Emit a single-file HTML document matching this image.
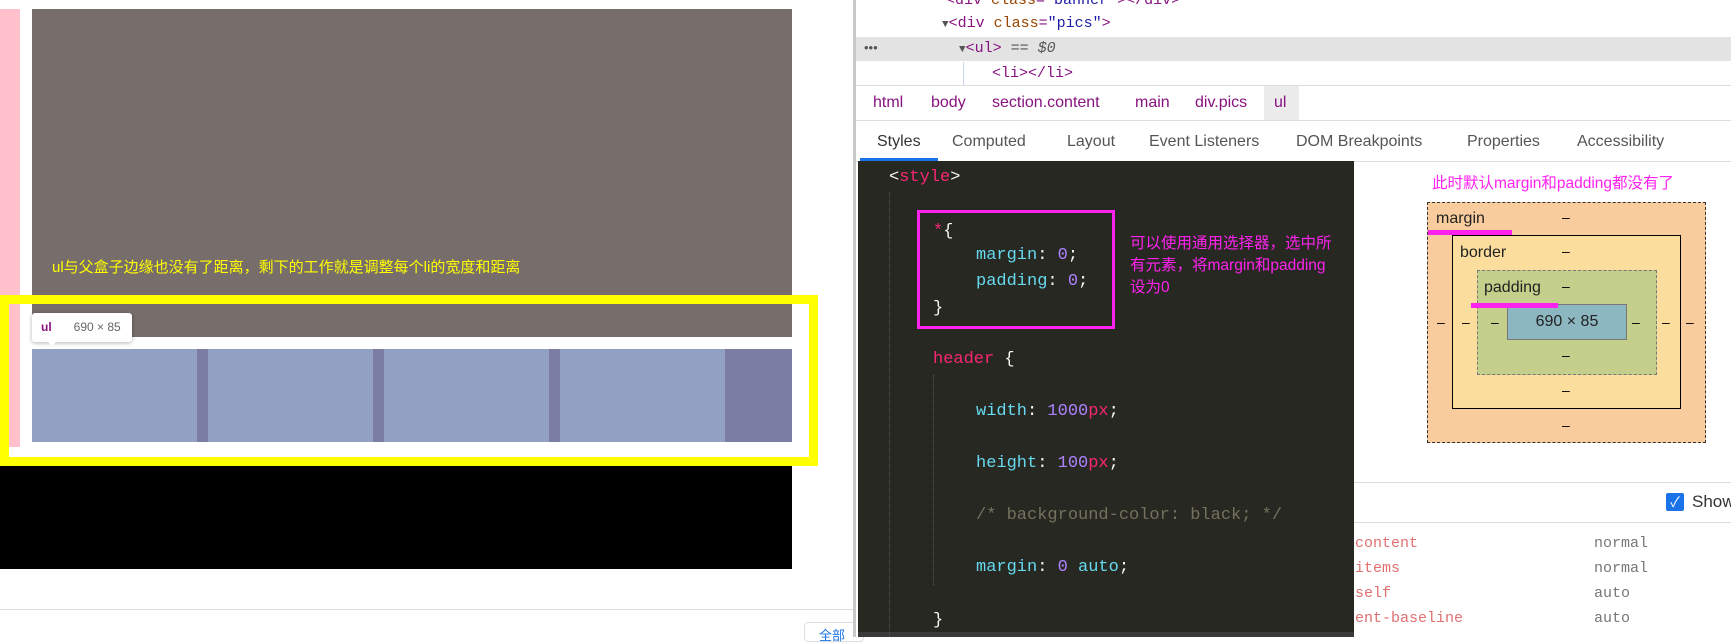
<!DOCTYPE html>
<html><head><meta charset="utf-8"><style>
*{margin:0;padding:0;box-sizing:border-box}
body{width:1731px;height:637px;position:relative;overflow:hidden;background:#fff;font-family:"Liberation Sans","Noto Sans CJK SC",sans-serif}
.a{position:absolute;white-space:nowrap}
.m{font-family:"Liberation Mono","DejaVu Sans Mono",monospace}
</style></head><body>
<!-- page -->
<div class="a" style="left:0;top:9px;width:20px;height:438px;background:#ffc0cb"></div>
<div class="a" style="left:32px;top:9px;width:760px;height:328px;background:#776d6b"></div>
<div class="a" style="left:52px;top:256px;color:#ffff00;font-size:15px">ul与父盒子边缘也没有了距离，剩下的工作就是调整每个li的宽度和距离</div>
<div class="a" style="left:32px;top:349px;width:760px;height:93px;background:#7b7ea2"></div>
<div class="a" style="left:32px;top:349px;width:165px;height:93px;background:#92a1c3"></div>
<div class="a" style="left:208px;top:349px;width:165px;height:93px;background:#92a1c3"></div>
<div class="a" style="left:384px;top:349px;width:165px;height:93px;background:#92a1c3"></div>
<div class="a" style="left:560px;top:349px;width:165px;height:93px;background:#92a1c3"></div>
<div class="a" style="left:0;top:465px;width:792px;height:104px;background:#000"></div>
<div class="a" style="left:0;top:295px;width:818px;height:171px;border:9px solid #ffff00"></div>
<div class="a" style="left:32px;top:313px;width:100px;height:29px;background:#fff;border-radius:3px;box-shadow:0 1px 4px rgba(0,0,0,.3);font-size:12px;line-height:29px;padding-left:9px"><b style="color:#881280">ul</b><span style="color:#666;margin-left:22px">690 × 85</span></div>
<div class="a" style="left:46px;top:340px;width:0;height:0;border-left:6px solid transparent;border-right:6px solid transparent;border-top:6px solid #fff"></div>
<div class="a" style="left:0;top:609px;width:855px;height:1px;background:#ddd"></div>
<div class="a" style="left:804px;top:622px;width:60px;height:20px;border:1px solid #ddd;border-radius:4px;color:#1a73e8;font-size:13px;padding:2px 0 0 14px">全部</div>
<!-- devtools -->
<div class="a" style="left:853px;top:0;width:3px;height:637px;background:#c8c8c8"></div>
<div class="a" style="left:856px;top:0;width:875px;height:637px;background:#fff"></div>
<div class="a" style="left:856px;top:37px;width:875px;height:24px;background:#e3e3e3"></div>
<div class="a m" style="left:946px;top:-8px;font-size:15px;color:#881280">&lt;div <span style="color:#994500">class</span>=<span style="color:#1a1aa6">"banner"</span>&gt;&lt;/div&gt;</div>
<div class="a m" style="left:942px;top:15px;font-size:15px;color:#881280"><span style="color:#555;font-size:11px">▼</span>&lt;div <span style="color:#994500">class</span>=<span style="color:#1a1aa6">"pics"</span>&gt;</div>
<div class="a" style="left:864px;top:40px;font-size:13px;color:#555">•••</div>
<div class="a m" style="left:959px;top:40px;font-size:15px;color:#881280"><span style="color:#555;font-size:11px">▼</span>&lt;ul&gt; <span style="color:#555;font-style:italic">== $0</span></div>
<div class="a" style="left:963px;top:62px;width:1px;height:23px;background:#c9d8f0"></div>
<div class="a m" style="left:992px;top:65px;font-size:15px;color:#881280">&lt;li&gt;&lt;/li&gt;</div>
<div class="a" style="left:856px;top:85px;width:875px;height:1px;background:#ddd"></div>
<div class="a" style="left:1264px;top:86px;width:35px;height:34px;background:#ececec"></div>
<div class="a" style="left:873px;top:94px;font-size:16px;color:#881280">html</div>
<div class="a" style="left:931px;top:94px;font-size:16px;color:#881280">body</div>
<div class="a" style="left:992px;top:94px;font-size:16px;color:#881280">section.content</div>
<div class="a" style="left:1135px;top:94px;font-size:16px;color:#881280">main</div>
<div class="a" style="left:1195px;top:94px;font-size:16px;color:#881280">div.pics</div>
<div class="a" style="left:1274px;top:94px;font-size:16px;color:#881280">ul</div>
<div class="a" style="left:856px;top:120px;width:875px;height:1px;background:#ddd"></div>
<div class="a" style="left:856px;top:161px;width:875px;height:1px;background:#ddd"></div>
<div class="a" style="left:877px;top:133px;font-size:16px;color:#333">Styles</div>
<div class="a" style="left:952px;top:133px;font-size:16px;color:#555">Computed</div>
<div class="a" style="left:1067px;top:133px;font-size:16px;color:#555">Layout</div>
<div class="a" style="left:1149px;top:133px;font-size:16px;color:#555">Event Listeners</div>
<div class="a" style="left:1296px;top:133px;font-size:16px;color:#555">DOM Breakpoints</div>
<div class="a" style="left:1467px;top:133px;font-size:16px;color:#555">Properties</div>
<div class="a" style="left:1577px;top:133px;font-size:16px;color:#555">Accessibility</div>
<div class="a" style="left:860px;top:158px;width:78px;height:3px;background:#1a73e8"></div>
<!-- code panel -->
<div class="a" style="left:858px;top:161px;width:496px;height:476px;background:#272822"></div>
<div class="a" style="left:858px;top:632px;width:496px;height:5px;background:#3a3a3a"></div>
<div class="a" style="left:889px;top:192px;width:0;height:445px;border-left:1px dotted #555"></div>
<div class="a" style="left:933px;top:375px;width:0;height:210px;border-left:1px dotted #555"></div>
<div class="a m" style="left:889px;top:168px;font-size:17px;color:#f8f8f2">&lt;<span style="color:#f92672">style</span>&gt;</div>
<div class="a" style="left:917px;top:210px;width:198px;height:119px;border:3px solid #ff22ee"></div>
<div class="a m" style="left:933px;top:222px;font-size:17px;color:#f8f8f2"><span style="color:#f92672">*</span>{</div>
<div class="a m" style="left:976px;top:246px;font-size:17px;color:#66d9ef">margin<span style="color:#f8f8f2">: </span><span style="color:#ae81ff">0</span><span style="color:#f8f8f2">;</span></div>
<div class="a m" style="left:976px;top:272px;font-size:17px;color:#66d9ef">padding<span style="color:#f8f8f2">: </span><span style="color:#ae81ff">0</span><span style="color:#f8f8f2">;</span></div>
<div class="a m" style="left:933px;top:299px;font-size:17px;color:#f8f8f2">}</div>
<div class="a" style="left:1130px;top:233px;font-size:15.5px;line-height:22px;color:#ff22ee">可以使用通用选择器，选中所<br>有元素，将margin和padding<br>设为0</div>
<div class="a m" style="left:933px;top:350px;font-size:17px;color:#f92672">header <span style="color:#f8f8f2">{</span></div>
<div class="a m" style="left:976px;top:402px;font-size:17px;color:#66d9ef">width<span style="color:#f8f8f2">: </span><span style="color:#ae81ff">1000</span><span style="color:#f92672">px</span><span style="color:#f8f8f2">;</span></div>
<div class="a m" style="left:976px;top:454px;font-size:17px;color:#66d9ef">height<span style="color:#f8f8f2">: </span><span style="color:#ae81ff">100</span><span style="color:#f92672">px</span><span style="color:#f8f8f2">;</span></div>
<div class="a m" style="left:976px;top:506px;font-size:17px;color:#75715e">/* background-color: black; */</div>
<div class="a m" style="left:976px;top:558px;font-size:17px;color:#66d9ef">margin<span style="color:#f8f8f2">: </span><span style="color:#ae81ff">0</span> auto<span style="color:#f8f8f2">;</span></div>
<div class="a m" style="left:933px;top:611px;font-size:17px;color:#f8f8f2">}</div>
<!-- box model -->
<div class="a" style="left:1432px;top:171px;font-size:15.5px;color:#ff22ee">此时默认margin和padding都没有了</div>
<div class="a" style="left:1427px;top:202px;width:279px;height:241px;background:#f9cc9d;border:1px dashed #333"></div>
<div class="a" style="left:1452px;top:235px;width:229px;height:174px;background:#fbdd9d;border:1px solid #000"></div>
<div class="a" style="left:1477px;top:270px;width:180px;height:105px;background:#c3cf8a;border:1px dashed #777"></div>
<div class="a" style="left:1507px;top:304px;width:120px;height:36px;background:#8cb6c0;border:1px solid #777;text-align:center;line-height:34px;font-size:16px;color:#222">690 × 85</div>
<div class="a" style="left:1436px;top:210px;font-size:16px;color:#222">margin</div>
<div class="a" style="left:1428px;top:230px;width:84px;height:5px;background:#ff22ee"></div>
<div class="a" style="left:1460px;top:244px;font-size:16px;color:#222">border</div>
<div class="a" style="left:1484px;top:279px;font-size:16px;color:#222">padding</div>
<div class="a" style="left:1471px;top:303px;width:87px;height:5px;background:#ff22ee"></div>
<div class="a" style="left:1562px;top:209px;font-size:14px">–</div>
<div class="a" style="left:1562px;top:243px;font-size:14px">–</div>
<div class="a" style="left:1562px;top:278px;font-size:14px">–</div>
<div class="a" style="left:1562px;top:347px;font-size:14px">–</div>
<div class="a" style="left:1562px;top:382px;font-size:14px">–</div>
<div class="a" style="left:1562px;top:417px;font-size:14px">–</div>
<div class="a" style="left:1437px;top:314px;font-size:14px">–</div>
<div class="a" style="left:1462px;top:314px;font-size:14px">–</div>
<div class="a" style="left:1491px;top:314px;font-size:14px">–</div>
<div class="a" style="left:1632px;top:314px;font-size:14px">–</div>
<div class="a" style="left:1662px;top:314px;font-size:14px">–</div>
<div class="a" style="left:1686px;top:314px;font-size:14px">–</div>
<div class="a" style="left:1354px;top:482px;width:377px;height:1px;background:#ddd"></div>
<div class="a" style="left:1666px;top:493px;width:18px;height:18px;background:#1a73e8;border-radius:2px;color:#fff;font-size:14px;line-height:18px;text-align:center">✓</div>
<div class="a" style="left:1692px;top:492px;font-size:17px;color:#333">Show</div>
<div class="a" style="left:1354px;top:522px;width:377px;height:1px;background:#ddd"></div>
<div class="a m" style="left:1355px;top:531px;font-size:15px;color:#e07070;line-height:25px">content<br>items<br>self<br>ent-baseline</div>
<div class="a m" style="left:1594px;top:531px;font-size:15px;color:#777;line-height:25px">normal<br>normal<br>auto<br>auto</div>
</body></html>
